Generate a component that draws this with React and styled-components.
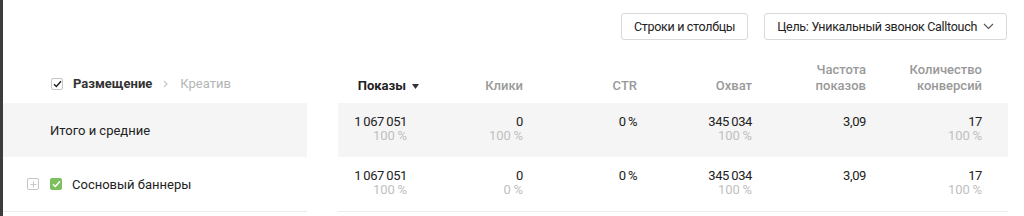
import React from "react";
import styled, { createGlobalStyle } from "styled-components";

const Global = createGlobalStyle`
  html, body { margin: 0; padding: 0; background: #fff; }
  body { font-family: Roboto, "Noto Sans", sans-serif; color: #222; }
  * { box-sizing: border-box; }
`;

const Page = styled.div`
  display: flex;
  width: 1024px;
  height: 216px;
  overflow: hidden;
`;

const SideEdge = styled.div`
  width: 3px;
  flex: none;
  background: #3c3c3c;
`;

const Main = styled.div`
  flex: 1;
  display: flex;
  flex-direction: column;
`;

const Toolbar = styled.div`
  height: 62px;
  display: flex;
  justify-content: flex-end;
  align-items: flex-start;
  gap: 16px;
  padding: 13px 17px 0 0;
`;

const Button = styled.button`
  height: 27px;
  padding: 0 12px;
  border: 1px solid #d9d9d9;
  border-radius: 3px;
  background: #fff;
  font-family: inherit;
  font-size: 12.5px;
  letter-spacing: -0.3px;
  color: #222;
  display: flex;
  align-items: center;
  gap: 6px;
  cursor: pointer;
`;

const Panels = styled.div`
  display: flex;
  gap: 31px;
`;

const LeftPanel = styled.div`
  width: 304px;
  flex: none;
  border-bottom: 1px solid #ececec;
`;

const RightPanel = styled.div`
  width: 670px;
  flex: none;
  border-bottom: 1px solid #ececec;
`;

const LeftHeader = styled.div`
  height: 41px;
  display: flex;
  align-items: center;
  padding: 2px 0 0 48px;
  font-size: 13px;
`;

const LeftRow = styled.div`
  height: 54px;
  display: flex;
  align-items: center;
  padding-left: ${(p) => (p.$indent ? 24 : 47)}px;
  background: ${(p) => (p.$total ? "#f5f5f5" : "#fff")};
  font-size: 13px;
  color: #222;
`;

const Box = styled.span`
  width: 12px;
  height: 12px;
  flex: none;
  border-radius: 2px;
  display: inline-flex;
  align-items: center;
  justify-content: center;
  border: 1px solid ${(p) => (p.$green ? "#7cbf5c" : "#c4c4c4")};
  background: ${(p) => (p.$green ? "#7cbf5c" : "#fff")};
  margin-right: ${(p) => p.$mr || 10}px;
`;

const Crumb = styled.span`
  font-weight: ${(p) => (p.$active ? 700 : 400)};
  color: ${(p) => (p.$active ? "#333" : "#b5b5b5")};
`;

const CrumbSep = styled.span`
  display: inline-flex;
  margin: 0 12px 0 11px;
`;

const Grid = styled.div`
  display: grid;
  grid-template-columns: 85px 116px 114px 115px 114px 116px 1fr;
  height: ${(p) => p.$h}px;
  background: ${(p) => (p.$total ? "#f5f5f5" : "#fff")};
`;

const HeadCell = styled.div`
  display: flex;
  flex-direction: column;
  align-items: flex-end;
  justify-content: flex-end;
  text-align: right;
  padding: 0 16px 12px 0;
  font-size: 13px;
  line-height: 16px;
  font-weight: 500;
  color: ${(p) => (p.$active ? "#222" : "#999")};
`;

const SortLabel = styled.span`
  display: inline-flex;
  align-items: center;
  gap: 6px;
  margin-right: -12px;
  font-weight: 700;
`;

const Cell = styled.div`
  display: flex;
  flex-direction: column;
  align-items: flex-end;
  padding: 12px 16px 0 0;
  font-size: 13px;
  line-height: 14px;
  color: #222;
`;

const Value = styled.span`
  display: block;
  height: 14px;
  letter-spacing: -0.4px;
`;

const Sub = styled.span`
  display: block;
  height: 14px;
  color: #c0c0c0;
`;

const Check = ({ color }) => (
  <svg width="9" height="8" viewBox="0 0 9 8">
    <path d="M1 4.2 L3.4 6.5 L8 1.3" fill="none" stroke={color} strokeWidth="1.5" />
  </svg>
);

const Plus = () => (
  <svg width="7" height="7" viewBox="0 0 7 7">
    <path d="M3.5 0.5 V6.5 M0.5 3.5 H6.5" stroke="#c8c8c8" strokeWidth="1" />
  </svg>
);

const ChevronDown = () => (
  <svg width="11" height="7" viewBox="0 0 11 7">
    <path d="M1 1 L5.5 5.5 L10 1" fill="none" stroke="#555" strokeWidth="1.1" />
  </svg>
);

const ChevronRight = () => (
  <svg width="5" height="8" viewBox="0 0 5 8">
    <path d="M1 1 L4 4 L1 7" fill="none" stroke="#c8c8c8" strokeWidth="1.2" />
  </svg>
);

const SortArrow = () => (
  <svg width="7" height="5" viewBox="0 0 7 5">
    <path d="M0 0 H7 L3.5 5 Z" fill="#333" />
  </svg>
);

const columns = [
  { label: ["Показы"], active: true },
  { label: ["Клики"] },
  { label: ["CTR"] },
  { label: ["Охват"] },
  { label: ["Частота", "показов"] },
  { label: ["Количество", "конверсий"] },
];

const T = "\u2009";

const rows = [
  {
    name: "Итого и средние",
    total: true,
    cells: [
      [`1${T}067${T}051`, `100${T}%`],
      ["0", `100${T}%`],
      [`0${T}%`],
      [`345${T}034`, `100${T}%`],
      ["3,09"],
      ["17", `100${T}%`],
    ],
  },
  {
    name: "Сосновый баннеры",
    cells: [
      [`1${T}067${T}051`, `100${T}%`],
      ["0", `0${T}%`],
      [`0${T}%`],
      [`345${T}034`, `100${T}%`],
      ["3,09"],
      ["17", `100${T}%`],
    ],
  },
];

export default function App() {
  return (
    <>
      <Global />
      <Page>
        <SideEdge />
        <Main>
          <Toolbar>
            <Button>Строки и столбцы</Button>
            <Button>
              Цель: Уникальный звонок Calltouch
              <ChevronDown />
            </Button>
          </Toolbar>
          <Panels>
            <LeftPanel>
              <LeftHeader>
                <Box>
                  <Check color="#222" />
                </Box>
                <Crumb $active>Размещение</Crumb>
                <CrumbSep>
                  <ChevronRight />
                </CrumbSep>
                <Crumb>Креатив</Crumb>
              </LeftHeader>
              {rows.map((r) =>
                r.total ? (
                  <LeftRow key={r.name} $total>
                    {r.name}
                  </LeftRow>
                ) : (
                  <LeftRow key={r.name} $indent>
                    <Box $mr={11}>
                      <Plus />
                    </Box>
                    <Box $green $mr={10}>
                      <Check color="#fff" />
                    </Box>
                    {r.name}
                  </LeftRow>
                )
              )}
            </LeftPanel>
            <RightPanel>
              <Grid $h={41}>
                {columns.map((c) => (
                  <HeadCell key={c.label.join()} $active={c.active}>
                    {c.active ? (
                      <SortLabel>
                        {c.label[0]}
                        <SortArrow />
                      </SortLabel>
                    ) : (
                      c.label.map((l) => <span key={l}>{l}</span>)
                    )}
                  </HeadCell>
                ))}
                <div />
              </Grid>
              {rows.map((r) => (
                <Grid key={r.name} $h={54} $total={r.total}>
                  {r.cells.map((c, i) => (
                    <Cell key={i}>
                      <Value>{c[0]}</Value>
                      {c[1] && <Sub>{c[1]}</Sub>}
                    </Cell>
                  ))}
                  <div />
                </Grid>
              ))}
            </RightPanel>
          </Panels>
        </Main>
      </Page>
    </>
  );
}
